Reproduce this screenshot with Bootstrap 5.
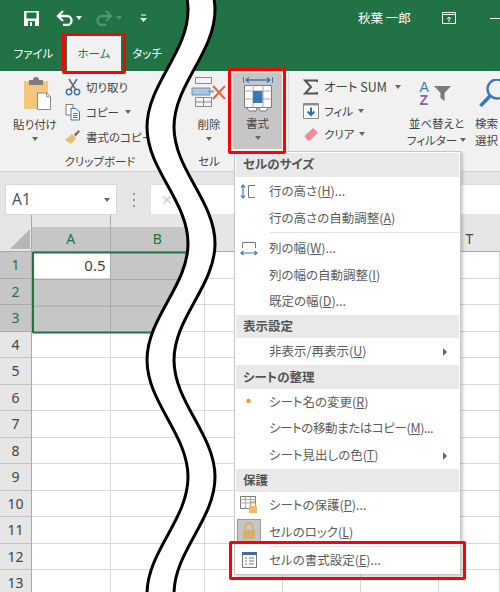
<!DOCTYPE html>
<html lang="ja"><head><meta charset="utf-8"><title>セルの書式設定</title>
<link href="https://cdn.jsdelivr.net/npm/bootstrap@5.3.0/dist/css/bootstrap.min.css" rel="stylesheet">
<style>
html,body{margin:0;width:500px;height:592px;overflow:hidden;background:#fff}
body,.dropdown-menu{font-family:"Noto Sans CJK JP","Noto Sans",sans-serif;font-feature-settings:"palt";color:#444}
.xl-frame{position:relative;width:500px;height:592px;overflow:hidden}
.xl-title{height:36px;background:#217346;color:#fff;font-size:12.5px}
.xl-title svg{flex:none;display:block}
.xl-ic-save{margin-left:24px}.xl-ic-undo{margin-left:17px}.xl-ic-redo{margin-left:14px}.xl-ic-cust{margin-left:18px}
.xl-car{width:0;height:0;border:3.5px solid transparent;border-top:4px solid #666;border-bottom:0;flex:none;display:inline-block}
.xl-car-w{border-top-color:#fff;margin-left:3px}.xl-car-f{border-top-color:#4f9471;margin-left:3px}
.xl-name{margin-left:auto;width:58px;white-space:nowrap}
.xl-dash{width:10px;height:1px;background:#fff;margin-left:34px}
.xl-ic-win{margin-left:26px}
.xl-tabs{height:35px;background:#217346;font-size:11.5px;color:#fff}
.xl-tab{display:flex;align-items:center;justify-content:center}
.xl-tab-a{width:67px}.xl-tab-b{width:54px;height:100%;background:#f1f1f1;color:#217346}.xl-tab-c{width:52px}
.xl-ribbon{height:101px;background:#f1f1f1;font-size:11.5px;border-bottom:1px solid #d2d2d2;line-height:16px;white-space:nowrap;overflow:hidden}
.xl-g1{width:190px;flex:none}.xl-g2{width:99px;flex:none;border-right:1px solid #dcdcdc}.xl-g3{flex:1;min-width:0}
.xl-top{height:81px}
.xl-large{display:flex;flex-direction:column;align-items:center;flex:none;padding-top:6px}
.xl-paste{width:70px}.xl-del{width:38px}.xl-fmt{width:49px;margin-left:5px;margin-top:2px;height:76px;background:#c6c6c6;padding-top:3px}
.xl-del svg{margin-bottom:9px}.xl-paste svg{margin-bottom:4px}.xl-fmt svg{margin-bottom:3px}
.xl-large .xl-car{margin-top:5px}
.xl-smalls{padding-top:3px;margin-left:-6px}
.xl-smallrow{height:25px;display:flex;align-items:center}
.xl-smallrow svg{width:18px;height:18px;margin-right:4px;flex:none}
.xl-smallrow .xl-car{margin-left:6px}
.xl-label{height:19px;font-size:11.5px;line-height:19px;text-align:center}
.xl-lab1{width:100px;margin-left:50px}.xl-lab2{width:38px}
.xl-edit{width:120px;flex:none;padding:4px 0 0 14px}
.xl-editrow{height:23.7px;display:flex;align-items:center}
.xl-editrow svg{width:16px;height:16px;margin-right:5px;flex:none}
.xl-editrow .xl-car{margin-left:5px}
.xl-sumtext{font-size:12.5px}
.xl-sort{width:55px;padding-top:10px}.xl-find{width:24px;margin-left:11px;padding-top:8px;align-items:flex-start}
.xl-azwrap{display:flex;height:26px;width:34px;margin-bottom:8px}
.xl-az{display:flex;flex-direction:column;width:14px;font-family:"Liberation Sans",sans-serif;font-size:14px;line-height:13px;flex:none}
.xl-az-a{color:#2f7fc1}.xl-az-z{color:#8c5fa8;font-weight:700}
.xl-find svg{margin-bottom:8px}
.xl-sort .xl-car{margin:0 0 0 3px}
.xl-line{display:flex;align-items:center;margin-top:1px}
.xl-fbar{height:43px;background:#e6e6e6;padding-top:12px}
.xl-namebox{margin-left:5px;width:112px;height:31px;background:#fff;border:1px solid #d8d8d8;font-size:15.5px;color:#555;padding:0 6px;font-family:"Noto Sans",sans-serif}
.xl-dots{width:33px;flex:none}
.xl-dots i{display:block;width:2px;height:2px;background:#999;margin:2px 0}
.xl-fx{flex:1;height:31px;background:#fff;color:#ccc;font-size:14px;padding-left:10px;border:1px solid #e0e0e0;border-right:0}
.xl-sheet{display:grid;grid-template-columns:32px 78.5px 94.5px 78px 78px 78px 61px;grid-template-rows:37px;grid-auto-rows:26.5px;font-family:"Noto Sans",sans-serif;font-size:14px;background:#fff}
.xl-sheet>div{border-right:1px solid #d8d8d8;border-bottom:1px solid #d8d8d8;display:flex;align-items:center;justify-content:center;overflow:hidden}
.xl-sheet>.xl-corner{background:#e6e6e6;border:0;border-bottom:1px solid #aaa;border-right:1px solid #aaa;display:block;padding:12px 2px 0 10px}
.xl-sheet>.xl-ch{background:#e6e6e6;border-right:0;border-bottom:1px solid #aaa;padding-top:11px;color:#444}
.xl-sheet>.xl-rh{background:#e6e6e6;border-right:1px solid #aaa;border-bottom:1px solid #c4c4c4;color:#444}
.xl-sheet>.xl-ch-s{background:linear-gradient(#e6e6e6 12px,#c6c6c6 12px);color:#217346;border-right:1px solid #aaa}
.xl-sheet>.xl-rh-s{background:#c6c6c6;color:#217346;border-bottom:1px solid #aaa}
.xl-sheet>.xl-val{justify-content:flex-end;padding-right:4px;color:#444;font-size:15px}
.xl-menu.dropdown-menu{position:absolute;left:234px;top:151px;width:227px;height:424px;margin:0;padding:1px;border:1px solid #c6c6c6;border-radius:0;background:#fff;box-shadow:2px 2px 3px rgba(0,0,0,.2);font-size:12px;color:#5c5c5c;min-width:0;white-space:nowrap}
.xl-menu .dropdown-header{height:23.5px;background:#e9e9e9;color:#555;font-weight:700;font-size:12.5px;padding:0 0 0 7px;display:flex;align-items:center}
.xl-menu .dropdown-item{height:26.7px;padding:0 0 0 33px;color:#5c5c5c;font-size:12.5px;display:flex;align-items:center;position:relative}
.xl-menu .dropdown-divider{margin:0 0 0 34px;border-top:1px solid #e2e2e2;opacity:1}
.xl-tight{letter-spacing:-.4px}
.xl-mic{position:absolute;left:4px;top:4px;width:18px;height:18px}
.xl-lockbox{position:absolute;left:1px;top:0;width:24px;height:24px;background:#c6c6c6;border:1px solid #999;display:flex;align-items:center;justify-content:center}
.xl-arrow{position:absolute;right:12px;top:10px;width:0;height:0;border:4px solid transparent;border-left:4px solid #666;border-right:0}
.xl-gap{height:2px}
.xl-overlay{position:absolute;left:0;top:0;width:500px;height:592px;pointer-events:none}
.xl-hl{position:absolute;z-index:1001;border:3.5px solid #f00;border-radius:2px;pointer-events:none}
.xl-hl-tab{left:62px;top:33px;width:64px;height:41px}
.xl-hl-fmt{left:228px;top:68px;width:58px;height:86px}
.xl-hl-item{left:229px;top:541px;width:237px;height:39px}
</style></head>
<body>
<div class="xl-frame">
  <div class="xl-title d-flex align-items-center">
    <svg class="xl-ic-save" width="15" height="15" viewBox="0 0 15 15"><path d="M0 0H15V15H0Z" fill="#fff"/><path d="M2.500 1.500H12.500V7.500H2.500Z" fill="#217346"/><path d="M4 10H11V15H4Z" fill="#217346"/><path d="M6 11H8V15H6Z" fill="#fff"/></svg>
    <svg class="xl-ic-undo" width="17" height="16" viewBox="0 0 17 16"><path d="M3 6H11a4.500 4.500 0 0 1 0 9H7" fill="none" stroke="#fff" stroke-width="2.300"/><path d="M7 1L2 6L7 11" fill="none" stroke="#fff" stroke-width="2.300"/></svg>
    <span class="xl-car xl-car-w"></span>
    <svg class="xl-ic-redo" width="17" height="16" viewBox="0 0 17 16"><path d="M14 6H6a4.500 4.500 0 0 0 0 9H10" fill="none" stroke="#4f9471" stroke-width="2.300"/><path d="M10 1L15 6L10 11" fill="none" stroke="#4f9471" stroke-width="2.300"/></svg>
    <span class="xl-car xl-car-f"></span>
    <svg class="xl-ic-cust" width="7" height="8" viewBox="0 0 7 8"><path d="M1 1H6" stroke="#fff"/><path d="M0 4H7L3.500 8Z" fill="#fff"/></svg>
    <span class="xl-name">秋葉 一郎</span>
    <svg class="xl-ic-win" width="14" height="12" viewBox="0 0 14 12"><path d="M.5.5H13.500V11.500H.5Z" fill="none" stroke="#fff"/><path d="M1 2.500H13" stroke="#fff"/><path d="M7 10V5M5 7L7 5L9 7" fill="none" stroke="#fff"/></svg>
    <span class="xl-dash"></span>
  </div>
  <div class="xl-tabs d-flex">
    <div class="xl-tab xl-tab-a">ファイル</div>
    <div class="xl-tab xl-tab-b">ホーム</div>
    <div class="xl-tab xl-tab-c">タッチ</div>
  </div>
  <div class="xl-ribbon d-flex">
    <div class="xl-g1">
      <div class="xl-top d-flex">
        <div class="xl-large xl-paste">
          <svg width="34" height="35" viewBox="0 0 34 35"><path d="M6 4H30V32H6Z" fill="#f3c67c"/><path d="M11 3H15a3 3 0 0 1 6 0H25V8H11Z" fill="#7c7c7c"/><path d="M19.500 16H28.500L32.500 19.500V32.500H19.500Z" fill="#fff" stroke="#8a8a8a"/><path d="M28.500 16V20H32.500" fill="none" stroke="#8a8a8a"/></svg>
          <span>貼り付け</span>
          <span class="xl-car"></span>
        </div>
        <div class="xl-smalls">
          <div class="xl-smallrow"><svg viewBox="0 0 18 18"><path d="M5 1L12 12M13 1L6 12" stroke="#6e6e6e" stroke-width="1.600" fill="none"/><circle cx="5" cy="14" r="2.700" fill="none" stroke="#3b78b8" stroke-width="1.500"/><circle cx="13" cy="14" r="2.700" fill="none" stroke="#3b78b8" stroke-width="1.500"/></svg><span>切り取り</span></div>
          <div class="xl-smallrow"><svg viewBox="0 0 18 18"><path d="M2 1.500H9V12H2Z" fill="#fff" stroke="#7a7a7a"/><path d="M7 5.500H12L15.500 9V17H7Z" fill="#fff" stroke="#3b78b8"/><path d="M9 10.500H13.500M9 12.500H13.500M9 14.500H13.500" stroke="#3b78b8"/></svg><span>コピー</span><span class="xl-car"></span></div>
          <div class="xl-smallrow"><svg viewBox="0 0 18 18"><path d="M1 12L8 6L12 10L7 16Z" fill="#e7bd72"/><path d="M10 6.500L14.500 2L16 3.500L11.500 8.500Z" fill="#6e6e6e"/></svg><span>書式のコピー</span></div>
        </div>
      </div>
      <div class="xl-label xl-lab1">クリップボード</div>
    </div>
    <div class="xl-g2">
      <div class="xl-top d-flex">
        <div class="xl-large xl-del">
          <svg width="36" height="30" viewBox="0 0 36 30"><g fill="#f4f4f4" stroke="#8a8a8a"><path d="M4.500 .5H20.500V6.500H4.500Z"/><path d="M4.500 20.500H20.500V29.500H4.500ZM12.500 20.500V29.500M4.500 25H20.500"/></g><path d="M1 11H19V18H1Z" fill="#a9c7e6" stroke="#8a8a8a"/><path d="M22 9L34 22M34 9L22 22" stroke="#e2694a" stroke-width="2.200"/><path d="M17 14.500H23" stroke="#7aa3cc" stroke-width="2"/></svg>
          <span>削除</span>
          <span class="xl-car"></span>
        </div>
        <div class="xl-large xl-fmt">
          <svg width="32" height="36" viewBox="0 0 32 36"><path d="M1.500 1V7M30.500 1V7" stroke="#3b78b8"/><path d="M4 4H28M7 1.500L4 4L7 6.500M25 1.500L28 4L25 6.500" fill="none" stroke="#3b78b8" stroke-width="1.300"/><path d="M2.500 9.500H29.500V31.500H2.500Z" fill="#fff" stroke="#7a7a7a"/><path d="M2.500 15H29.500M2.500 23H29.500M11 9.500V31.500M21 9.500V31.500" stroke="#a8a8a8"/><path d="M11 15H20.500V27H11Z" fill="#3b78b8"/><path d="M5 32L7 35H14L15 32M17 32L18 35H24L26 32" fill="#fff" stroke="#7a7a7a"/></svg>
          <span>書式</span>
          <span class="xl-car"></span>
        </div>
      </div>
      <div class="xl-label xl-lab2">セル</div>
    </div>
    <div class="xl-g3 d-flex">
      <div class="xl-edit">
        <div class="xl-editrow"><svg viewBox="0 0 16 16"><path d="M14 3V1.500H2L8 8L2 14.500H14V13" fill="none" stroke="#555" stroke-width="2"/></svg><span class="xl-sumtext">オート SUM</span><span class="xl-car ms-2"></span></div>
        <div class="xl-editrow"><svg viewBox="0 0 16 16"><path d="M.5 .5H15.500V15.500H.5Z" fill="#fff" stroke="#8a8a8a"/><path d="M.5 1.500H15.500" stroke="#8a8a8a" stroke-width="2"/><path d="M8 4.500V12M4.500 8.500L8 12L11.500 8.500" fill="none" stroke="#2a6fb5" stroke-width="2"/></svg><span>フィル</span><span class="xl-car"></span></div>
        <div class="xl-editrow"><svg viewBox="0 0 16 16"><path d="M1.500 10L10 2L15 6.500L7 14.500H4.500Z" fill="#ee8d9a"/></svg><span>クリア</span><span class="xl-car"></span></div>
      </div>
      <div class="xl-large xl-sort">
        <div class="xl-azwrap"><div class="xl-az"><span class="xl-az-a">A</span><span class="xl-az-z">Z</span></div><svg width="20" height="26" viewBox="14 0 20 26"><path d="M14 5H31L24.500 12V20L20.500 17V12Z" fill="#7a7a7a"/></svg></div>
        <span>並べ替えと</span>
        <span class="xl-line"><span>フィルター</span><span class="xl-car"></span></span>
      </div>
      <div class="xl-large xl-find">
        <svg width="26" height="28" viewBox="0 0 26 28"><circle cx="22" cy="10" r="9.500" fill="none" stroke="#3b78b8" stroke-width="2.400"/><path d="M15 17L5.500 27" stroke="#3b78b8" stroke-width="3.500"/></svg>
        <span>検索</span>
        <span class="xl-line"><span>選択</span></span>
      </div>
    </div>
  </div>
  <div class="xl-fbar d-flex">
    <div class="xl-namebox d-flex align-items-center justify-content-between"><span>A1</span><span class="xl-car"></span></div>
    <div class="xl-dots d-flex flex-column align-items-center justify-content-center"><i></i><i></i><i></i></div>
    <div class="xl-fx d-flex align-items-center">✕</div>
  </div>
  <div class="xl-sheet">
    <div class="xl-corner"><svg width="20" height="20" viewBox="0 0 20 20"><path d="M20 0V20H0Z" fill="#b6b6b6"/></svg></div><div class="xl-ch xl-ch-s">A</div><div class="xl-ch xl-ch-s">B</div><div class="xl-ch"></div><div class="xl-ch"></div><div class="xl-ch"></div><div class="xl-ch">T</div>
    <div class="xl-rh xl-rh-s">1</div><div class="xl-val">0.5</div><div></div><div></div><div></div><div></div><div></div>
    <div class="xl-rh xl-rh-s">2</div><div></div><div></div><div></div><div></div><div></div><div></div>
    <div class="xl-rh xl-rh-s">3</div><div></div><div></div><div></div><div></div><div></div><div></div>
    <div class="xl-rh">4</div><div></div><div></div><div></div><div></div><div></div><div></div>
    <div class="xl-rh">5</div><div></div><div></div><div></div><div></div><div></div><div></div>
    <div class="xl-rh">6</div><div></div><div></div><div></div><div></div><div></div><div></div>
    <div class="xl-rh">7</div><div></div><div></div><div></div><div></div><div></div><div></div>
    <div class="xl-rh">8</div><div></div><div></div><div></div><div></div><div></div><div></div>
    <div class="xl-rh">9</div><div></div><div></div><div></div><div></div><div></div><div></div>
    <div class="xl-rh">10</div><div></div><div></div><div></div><div></div><div></div><div></div>
    <div class="xl-rh">11</div><div></div><div></div><div></div><div></div><div></div><div></div>
    <div class="xl-rh">12</div><div></div><div></div><div></div><div></div><div></div><div></div>
    <div class="xl-rh">13</div><div></div><div></div><div></div><div></div><div></div><div></div>
  </div>

  <svg class="xl-overlay" viewBox="0 0 500 592">
    <path d="M32 279H110.500V253H200L167 332H32Z" fill="#c6c6c6"/>
    <path d="M110.500 253V332M32 279.500H190M32 306H180" stroke="#aaa" stroke-width="1" fill="none"/>
    <path d="M33 252.500H200M33 252V333M33 332.500H168" stroke="#217346" stroke-width="2" fill="none"/>
    <path d="M147 -107C147 -64.400 188 -32.600 188 10C188 52.600 147 84.400 147 127C147 169.600 188 201 188 243.500C188 286 147 317.500 147 360C147 402.500 188 434.500 188 477C188 519.500 147 551.500 147 594L147 600H174L174 594C174 551.500 215 519.500 215 477C215 434.500 174 402.500 174 360C174 317.500 215 286 215 243.500C215 201 174 169.600 174 127C174 84.400 215 52.600 215 10C215 -32.600 174 -64.400 174 -107Z" fill="#fff" stroke="#000" stroke-width="3"/>
  </svg>

  <div class="dropdown-menu show xl-menu">
    <div class="dropdown-header">セルのサイズ</div>
    <div class="xl-gap"></div>
    <div class="dropdown-item"><svg class="xl-mic" viewBox="0 0 18 18"><path d="M3 2V15M1 4.500L3 2L5 4.500M1 12.500L3 15L5 12.500" fill="none" stroke="#3b78b8" stroke-width="1.200"/><path d="M15 2.500H8.500V14.500H15" fill="none" stroke="#777"/></svg><span>行の高さ(<u>H</u>)...</span></div>
    <div class="dropdown-item"><span>行の高さの自動調整(<u>A</u>)</span></div>
    <div class="dropdown-divider"></div>
    <div class="xl-gap"></div>
    <div class="dropdown-item"><svg class="xl-mic" viewBox="0 0 18 18"><path d="M2.500 9V3.500H15.500V9" fill="none" stroke="#777"/><path d="M1 14H17M3.500 12L1 14L3.500 16M14.500 12L17 14L14.500 16" fill="none" stroke="#3b78b8" stroke-width="1.200"/></svg><span>列の幅(<u>W</u>)...</span></div>
    <div class="dropdown-item"><span>列の幅の自動調整(<u>I</u>)</span></div>
    <div class="dropdown-item"><span>既定の幅(<u>D</u>)...</span></div>
    <div class="dropdown-header">表示設定</div>
    <div class="dropdown-item"><span>非表示/再表示(<u>U</u>)</span><span class="xl-arrow"></span></div>
    <div class="dropdown-header">シートの整理</div>
    <div class="dropdown-item"><svg class="xl-mic" viewBox="0 0 18 18"><circle cx="8.500" cy="8" r="2.200" fill="#f39a2b"/></svg><span>シート名の変更(<u>R</u>)</span></div>
    <div class="dropdown-item"><span class="xl-tight">シートの移動またはコピー(<u>M</u>)...</span></div>
    <div class="dropdown-item"><span>シート見出しの色(<u>T</u>)</span><span class="xl-arrow"></span></div>
    <div class="dropdown-header">保護</div>
    <div class="dropdown-item"><svg class="xl-mic" viewBox="0 0 18 18"><path d="M.5 .5H15.500V12.500H.5Z" fill="#fff" stroke="#777"/><path d="M.5 3.500H15.500M.5 7H15.500M5.500 .5V12.500M10.500 .5V12.500" stroke="#aaa"/><path d="M9 10H17V17H9Z" fill="#eebb66"/><path d="M10.500 10V8a2.500 2.500 0 0 1 5 0V10" fill="none" stroke="#c99a4a"/></svg><span>シートの保護(<u>P</u>)...</span></div>
    <div class="dropdown-item"><span class="xl-lockbox"><svg width="14" height="18" viewBox="0 0 14 18"><path d="M1 8H13V17H1Z" fill="#d9b06b"/><path d="M3 8V5a4 4 0 0 1 8 0V8" fill="none" stroke="#d9b06b" stroke-width="1.800"/></svg></span><span>セルのロック(<u>L</u>)</span></div>
    <div class="dropdown-divider"></div>
    <div class="dropdown-item"><svg class="xl-mic" viewBox="0 0 18 18"><path d="M2.500 1.500H16.500V16.500H2.500Z" fill="#fff" stroke="#777"/><path d="M2 2.500H17" stroke="#3b6ea5" stroke-width="3"/><path d="M5 7H7M9 7H14M5 10H7M9 10H14M5 13H7M9 13H14" stroke="#777"/></svg><span>セルの書式設定(<u>E</u>)...</span></div>
  </div>

  <div class="xl-hl xl-hl-tab"></div>
  <div class="xl-hl xl-hl-fmt"></div>
  <div class="xl-hl xl-hl-item"></div>
</div>
<script src="https://cdn.jsdelivr.net/npm/bootstrap@5.3.0/dist/js/bootstrap.bundle.min.js"></script>
</body></html>
